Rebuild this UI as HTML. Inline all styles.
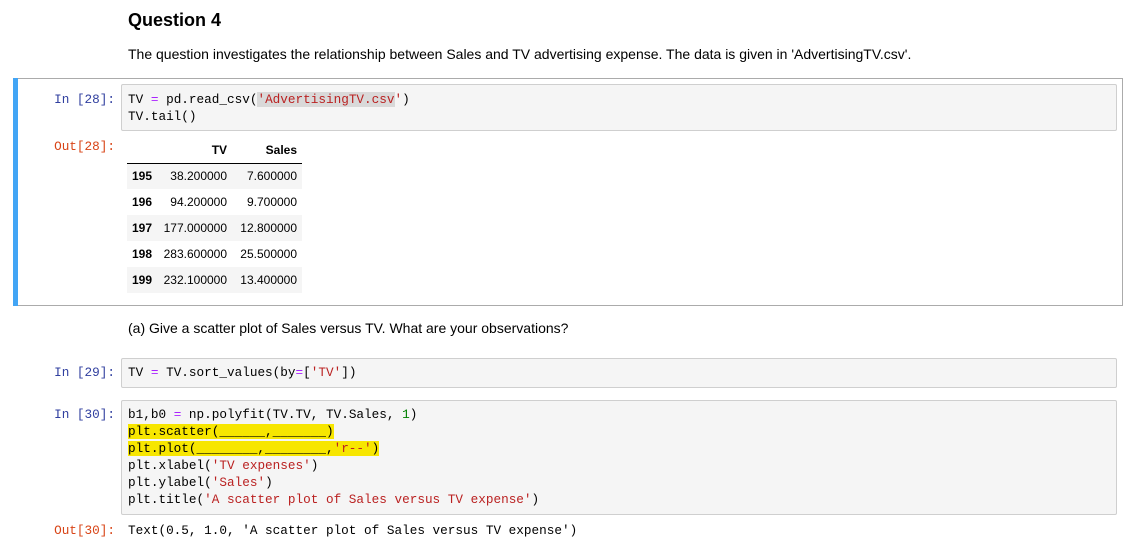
<!DOCTYPE html>
<html><head><meta charset="utf-8"><style>
*{margin:0;padding:0;box-sizing:border-box}
body{width:1136px;height:542px;background:#fff;position:relative;overflow:hidden;font-family:"Liberation Sans",Arial,sans-serif;color:#000}
.a{position:absolute}
.mono{font-family:"Liberation Mono",monospace;font-size:12.7px;line-height:17px;white-space:pre}
.pin{color:#303f9f;text-align:right;width:115px;left:0}
.pout{color:#d84315;text-align:right;width:115px;left:0}
.box{background:#f5f5f5;border:1px solid #cfcfcf;border-radius:2px}
.s{color:#ba2121}.o{color:#aa22ff}.n{color:#008000}
.hl{background:#f7e600}
table{border-collapse:collapse;font-size:12px}
td,th{padding:0 5px;height:26px;text-align:right}
th{font-weight:bold}
tbody tr:nth-child(odd){background:#f5f5f5}
thead th{border-bottom:1px solid #000;height:26px}
</style></head><body>
<div class="a" style="left:128px;top:10px;font-size:18px;font-weight:bold">Question 4</div>
<div class="a" style="left:128px;top:46px;font-size:14px">The question investigates the relationship between Sales and TV advertising expense. The data is given in 'AdvertisingTV.csv'.</div>

<div class="a" style="left:13px;top:78px;width:1110px;height:228px;border:1px solid #ababab"></div>
<div class="a" style="left:13px;top:78px;width:5px;height:228px;background:#42a5f5"></div>
<div class="a mono pin" style="top:91px">In [28]:</div>
<div class="a box" style="left:121px;top:84px;width:996px;height:47px"></div>
<div class="a mono" style="left:128px;top:91px">TV <span class="o">=</span> pd.read_csv(<span class="s" style="background:#d9d9d9">'AdvertisingTV.csv</span><span class="s">'</span>)
TV.tail()</div>
<div class="a mono pout" style="top:138px">Out[28]:</div>
<table class="a" style="left:127px;top:137px">
<thead><tr><th style="width:30px"></th><th style="width:75px">TV</th><th style="width:70px">Sales</th></tr></thead>
<tbody>
<tr><th>195</th><td>38.200000</td><td>7.600000</td></tr>
<tr><th>196</th><td>94.200000</td><td>9.700000</td></tr>
<tr><th>197</th><td>177.000000</td><td>12.800000</td></tr>
<tr><th>198</th><td>283.600000</td><td>25.500000</td></tr>
<tr><th>199</th><td>232.100000</td><td>13.400000</td></tr>
</tbody></table>

<div class="a" style="left:128px;top:320px;font-size:14px">(a) Give a scatter plot of Sales versus TV. What are your observations?</div>

<div class="a mono pin" style="top:364px">In [29]:</div>
<div class="a box" style="left:121px;top:358px;width:996px;height:30px"></div>
<div class="a mono" style="left:128px;top:364px">TV <span class="o">=</span> TV.sort_values(by<span class="o">=</span>[<span class="s">'TV'</span>])</div>

<div class="a mono pin" style="top:406px">In [30]:</div>
<div class="a box" style="left:121px;top:400px;width:996px;height:115px"></div>
<div class="a mono" style="left:128px;top:406px">b1,b0 <span class="o">=</span> np.polyfit(TV.TV, TV.Sales, <span class="n">1</span>)
<span class="hl">plt.scatter(______,_______)</span>
<span class="hl">plt.plot(________,________,<span class="s">'r--'</span>)</span>
plt.xlabel(<span class="s">'TV expenses'</span>)
plt.ylabel(<span class="s">'Sales'</span>)
plt.title(<span class="s">'A scatter plot of Sales versus TV expense'</span>)</div>
<div class="a mono pout" style="top:522px">Out[30]:</div>
<div class="a mono" style="left:128px;top:522px">Text(0.5, 1.0, 'A scatter plot of Sales versus TV expense')</div>
</body></html>
